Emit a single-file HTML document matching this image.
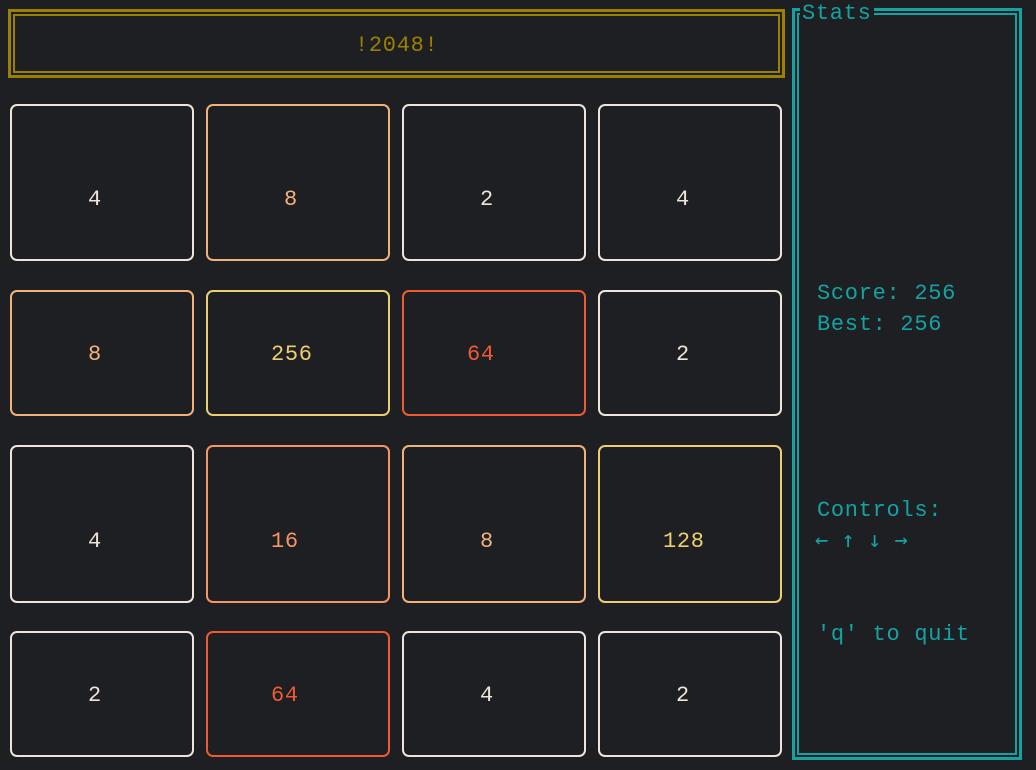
<!DOCTYPE html>
<html><head><meta charset="utf-8"><style>
html,body{margin:0;padding:0;background:#1e1f22;width:1036px;height:770px;overflow:hidden;position:relative;font-family:"Liberation Mono","DejaVu Sans Mono",monospace;}
.b{position:absolute;box-sizing:border-box;}
.tile{position:absolute;box-sizing:border-box;border:2px solid;border-radius:7px;}
.t{position:absolute;font-size:22px;line-height:24px;letter-spacing:0.7px;white-space:pre;}
.c2{color:#eee4da;border-color:#eee4da}
.c8{color:#f2b179;border-color:#f2b179}
.c16{color:#f59563;border-color:#f59563}
.c64{color:#f05a33;border-color:#f05a33}
.c128{color:#edcf72;border-color:#edcf72}
.s{color:#13a3a3}
.ar{font-family:"DejaVu Sans Mono",monospace;font-size:22px;letter-spacing:0}
</style></head><body>
<div class="b" style="left:8px;top:9px;width:777px;height:69px;border:3px solid #9c8000;"></div>
<div class="b" style="left:13px;top:14px;width:767px;height:59px;border:2px solid #9c8000;"></div>
<div class="t" style="left:355px;top:34px;color:#9c8000">!2048!</div>

<div class="b" style="left:792px;top:8px;width:230px;height:752px;border:3px solid #13a3a3;"></div>
<div class="b" style="left:797px;top:13px;width:220px;height:742px;border:2px solid #13a3a3;"></div>
<div class="t s" style="left:800px;top:2px;background:#1e1f22;padding:0 2px">Stats</div>
<div class="t s" style="left:817px;top:282px">Score: 256</div>
<div class="t s" style="left:817px;top:313px">Best: 256</div>
<div class="t s" style="left:817px;top:499px">Controls:</div>
<div class="t s ar" style="left:815px;top:529px">← ↑ ↓ →</div>
<div class="t s" style="left:817px;top:623px">'q' to quit</div>

<div class="tile c2" style="left:10px;top:104px;width:184px;height:157px"></div>
<div class="tile c8" style="left:206px;top:104px;width:184px;height:157px"></div>
<div class="tile c2" style="left:402px;top:104px;width:184px;height:157px"></div>
<div class="tile c2" style="left:598px;top:104px;width:184px;height:157px"></div>
<div class="t c2" style="left:88px;top:188px">4</div>
<div class="t c8" style="left:284px;top:188px">8</div>
<div class="t c2" style="left:480px;top:188px">2</div>
<div class="t c2" style="left:676px;top:188px">4</div>

<div class="tile c8" style="left:10px;top:290px;width:184px;height:126px"></div>
<div class="tile c128" style="left:206px;top:290px;width:184px;height:126px"></div>
<div class="tile c64" style="left:402px;top:290px;width:184px;height:126px"></div>
<div class="tile c2" style="left:598px;top:290px;width:184px;height:126px"></div>
<div class="t c8" style="left:88px;top:343px">8</div>
<div class="t c128" style="left:271px;top:343px">256</div>
<div class="t c64" style="left:467px;top:343px">64</div>
<div class="t c2" style="left:676px;top:343px">2</div>

<div class="tile c2" style="left:10px;top:445px;width:184px;height:158px"></div>
<div class="tile c16" style="left:206px;top:445px;width:184px;height:158px"></div>
<div class="tile c8" style="left:402px;top:445px;width:184px;height:158px"></div>
<div class="tile c128" style="left:598px;top:445px;width:184px;height:158px"></div>
<div class="t c2" style="left:88px;top:530px">4</div>
<div class="t c16" style="left:271px;top:530px">16</div>
<div class="t c8" style="left:480px;top:530px">8</div>
<div class="t c128" style="left:663px;top:530px">128</div>

<div class="tile c2" style="left:10px;top:631px;width:184px;height:126px"></div>
<div class="tile c64" style="left:206px;top:631px;width:184px;height:126px"></div>
<div class="tile c2" style="left:402px;top:631px;width:184px;height:126px"></div>
<div class="tile c2" style="left:598px;top:631px;width:184px;height:126px"></div>
<div class="t c2" style="left:88px;top:684px">2</div>
<div class="t c64" style="left:271px;top:684px">64</div>
<div class="t c2" style="left:480px;top:684px">4</div>
<div class="t c2" style="left:676px;top:684px">2</div>
</body></html>
